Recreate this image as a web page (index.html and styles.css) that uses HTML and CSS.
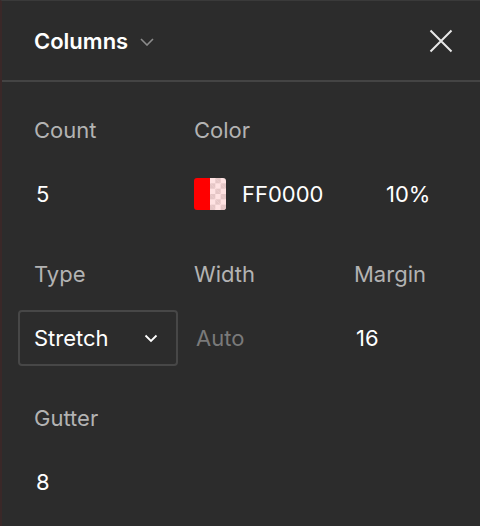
FILE: index.html
```html
<!DOCTYPE html>
<html>
<head>
<meta charset="utf-8">
<link rel="stylesheet" href="styles.css">
</head>
<body>
<div class="panel">
  <div class="header">
    <div class="title">Columns
      <svg class="title-chev" width="14" height="8" viewBox="0 0 14 8"><path d="M1 1l6 6 6-6" fill="none" stroke="#8c8c8c" stroke-width="1.6"/></svg>
    </div>
    <svg class="close" width="24" height="24" viewBox="0 0 24 24"><path d="M1.5 1.5l21 21M22.5 1.5l-21 21" fill="none" stroke="#e8e8e8" stroke-width="2"/></svg>
  </div>
  <div class="content">
    <div class="group">
      <div class="label">Count</div>
      <div class="label span2">Color</div>
      <div class="value plain">5</div>
      <div class="value span2 color">
        <span class="swatch"><span class="solid"></span><span class="checker"></span></span>
        <span class="hex">FF0000</span>
        <span class="pct">10%</span>
      </div>
    </div>
    <div class="group">
      <div class="label">Type</div>
      <div class="label">Width</div>
      <div class="label">Margin</div>
      <div class="value select-cell"><div class="select">Stretch<svg width="14" height="9" viewBox="0 0 14 9"><path d="M1.5 1.5l5.5 5.5 5.5-5.5" fill="none" stroke="#fff" stroke-width="1.8"/></svg></div></div>
      <div class="value plain muted">Auto</div>
      <div class="value plain">16</div>
    </div>
    <div class="group">
      <div class="label">Gutter</div>
      <div class="label"></div>
      <div class="label"></div>
      <div class="value plain">8</div>
    </div>
  </div>
</div>
</body>
</html>
```

FILE: styles.css
```css
html, body {
  margin: 0;
  padding: 0;
  background: #2c2c2c;
}
body {
  font-family: Inter, "Noto Sans", sans-serif;
  font-size: 22px;
  color: #fff;
}
.panel {
  width: 480px;
  height: 526px;
  box-sizing: border-box;
  background: #2c2c2c;
  border-left: 2px solid #3a2828;
  border-top: 1px solid #3a3a3a;
  overflow: hidden;
}
.header {
  height: 79px;
  display: flex;
  align-items: center;
  justify-content: space-between;
  padding: 0 27px 0 32px;
  border-bottom: 2px solid #444;
}
.title {
  font-weight: 600;
  display: flex;
  align-items: center;
  gap: 12px;
  color: #fff;
}
.title-chev {
  margin-top: 2px;
}
.content {
  padding: 16px 0 0 16px;
}
.group {
  display: grid;
  grid-template-columns: repeat(3, 160px);
  grid-auto-rows: 64px;
  margin-bottom: 16px;
}
.label, .value {
  display: flex;
  align-items: center;
  padding-left: 16px;
}
.value.plain {
  padding-left: 18px;
}
.label {
  color: #b3b3b3;
}
.span2 {
  grid-column: span 2;
}
.muted {
  color: #7a7a7a;
}
.swatch {
  display: flex;
  width: 32px;
  height: 32px;
  border-radius: 3px;
  overflow: hidden;
  margin-right: 16px;
}
.solid {
  width: 16px;
  background: #ff0000;
}
.checker {
  width: 16px;
  background-color: #ffe2e2;
  background-image:
    linear-gradient(45deg, #e5c6c6 25%, transparent 25%, transparent 75%, #e5c6c6 75%),
    linear-gradient(45deg, #e5c6c6 25%, transparent 25%, transparent 75%, #e5c6c6 75%);
  background-size: 10.66px 10.66px;
  background-position: 0 0, 5.33px 5.33px;
}
.hex {
  width: 144px;
}
.select-cell {
  padding-left: 0;
}
.select {
  width: 160px;
  height: 56px;
  box-sizing: border-box;
  border: 2px solid #474747;
  border-radius: 4px;
  display: flex;
  align-items: center;
  justify-content: space-between;
  padding: 0 18px 0 14px;
}
```
